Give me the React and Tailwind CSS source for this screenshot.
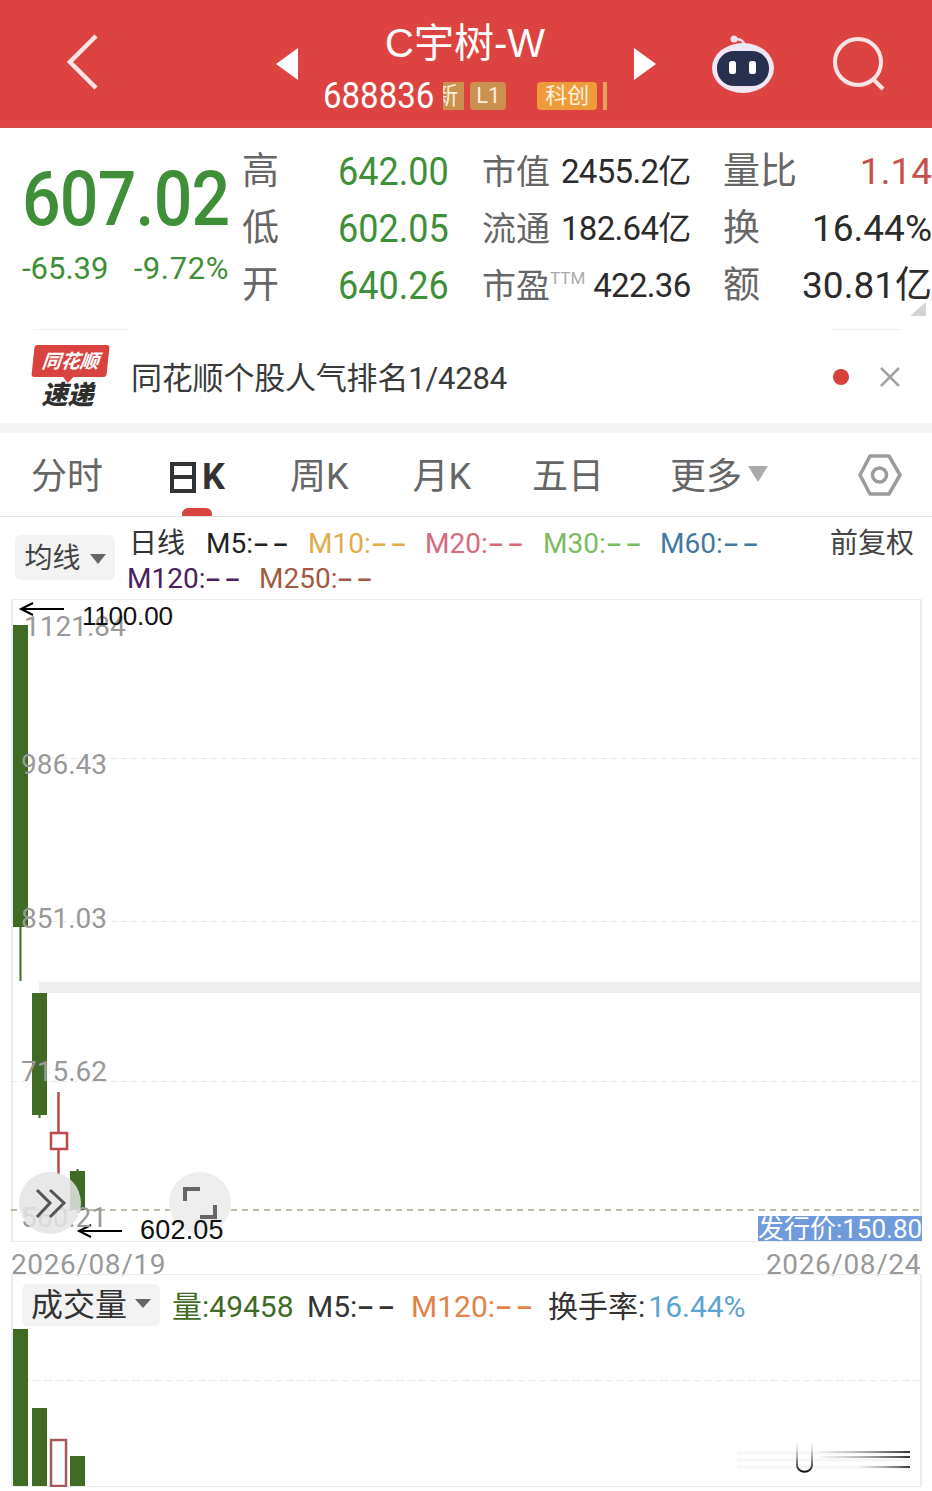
const GREEN = 'text-[#3f8f38]'

const QUOTE_ROWS = [
  { label: '高', value: '642.00', stat: '市值', statValue: '2455.2亿', side: '量比', sideValue: '1.14', sideColor: 'text-[#c8504c]' },
  { label: '低', value: '602.05', stat: '流通', statValue: '182.64亿', side: '换', sideValue: '16.44%', sideColor: 'text-[#2b2b2b]' },
  { label: '开', value: '640.26', stat: '市盈', ttm: true, statValue: '422.36', side: '额', sideValue: '30.81亿', sideColor: 'text-[#2b2b2b]' },
]

function Dashes() {
  return <span className="inline-block origin-left scale-x-[1.7] font-medium tracking-[2px]">--</span>
}

function Robot() {
  return (
    <svg width="66" height="60" viewBox="710 34 66 60" className="shrink-0">
      <path d="M744 46c1-5-2-8-9-8" fill="none" stroke="#f3d9e4" strokeWidth="2.5" />
      <circle cx="734" cy="38" r="3.5" fill="#f6dfe6" />
      <ellipse cx="743" cy="67" rx="31" ry="25" fill="#efe6f6" />
      <rect x="717" y="50" width="52" height="35" rx="17" fill="#27304f" />
      <rect x="729" y="60" width="7" height="13" rx="2.5" fill="#fff" />
      <rect x="749" y="60" width="7" height="13" rx="2.5" fill="#fff" />
    </svg>
  )
}

function Header() {
  return (
    <div className="flex h-[128px] items-center bg-[#dd4441] border-b-2 border-[#d24a47] text-white">
      <svg width="32" height="58" viewBox="0 0 32 58" className="ml-[66px] mt-[-2px] shrink-0">
        <path d="M30 3L4 29l26 26" fill="none" stroke="#f8e4e2" strokeWidth="4.5" />
      </svg>
      <svg width="22" height="32" viewBox="0 0 22 32" className="ml-[178px] mt-[2px] shrink-0">
        <path d="M22 0v32L0 16z" fill="#fff" />
      </svg>
      <div className="ml-[25px] w-[311px] shrink-0 pt-[5px]">
        <div className="pl-[62px] font-['Liberation_Sans','Noto_Sans_CJK_SC',sans-serif] text-[40px] leading-[44px]">C宇树-W</div>
        <div className="mt-[16px] flex h-[30px] items-center">
          <span className="inline-block origin-left scale-y-[1.1] text-[33px] leading-[30px]">688836</span>
          <span className="ml-[9px] flex h-[28px] w-[21px] items-center overflow-hidden bg-[#cc9050] text-[24px] text-[#fbeedd]">
            <span className="ml-[-9px] shrink-0">新</span>
          </span>
          <span className="ml-[6px] flex h-[28px] w-[36px] items-center justify-center rounded-sm bg-[#cc9050] text-[22px] text-[#fbeedd]">L1</span>
          <span className="ml-[31px] flex h-[28px] w-[60px] items-center justify-center rounded-sm bg-[#ee9c39] text-[22px] text-[#fdf1df]">科创</span>
          <span className="ml-[6px] h-[28px] w-[4px] bg-[#e9a35a]" />
        </div>
      </div>
      <svg width="22" height="32" viewBox="0 0 22 32" className="mt-[2px] shrink-0">
        <path d="M0 0v32l22-16z" fill="#fff" />
      </svg>
      <div className="ml-[54px] mt-[3px]">
        <Robot />
      </div>
      <svg width="56" height="54" viewBox="0 0 56 54" className="ml-[56px] mt-[2px] shrink-0">
        <circle cx="26" cy="25" r="23" fill="none" stroke="#f8e4e2" strokeWidth="4" />
        <path d="M41 42l10 10" stroke="#f8e4e2" strokeWidth="4" />
      </svg>
    </div>
  )
}

function Quote() {
  return (
    <div className="relative flex h-[202px] bg-white">
      <div className="w-[242px] shrink-0 pl-[22px] pt-[31px]">
        <div className={`origin-center scale-y-[1.12] text-[68px] font-medium leading-[80px] tracking-[-0.8px] ${GREEN}`}>607.02</div>
        <div className={`mt-[10px] flex w-[207px] justify-between text-[31px] leading-[40px] ${GREEN}`}>
          <span>-65.39</span>
          <span className="tracking-[0.6px]">-9.72%</span>
        </div>
      </div>
      <div className="grid grid-cols-[96px_144px_241px_209px] auto-rows-[57px] pt-[15px] items-center">
        {QUOTE_ROWS.map((row) => (
          <QuoteRow key={row.label} row={row} />
        ))}
      </div>
      <svg width="16" height="16" viewBox="0 0 16 16" className="absolute right-[6px] bottom-[12px]">
        <path d="M16 0v14H0z" fill="#d4d4d4" />
      </svg>
    </div>
  )
}

function QuoteRow({ row }) {
  return (
    <>
      <span className="text-[37px] leading-none text-[#666]">{row.label}</span>
      <span className={`inline-block scale-y-[1.08] text-[36px] leading-none ${GREEN}`}>{row.value}</span>
      <span className="flex items-center whitespace-nowrap text-[#2b2b2b]">
        <span className="text-[34px] leading-none text-[#666]">{row.stat}</span>
        {row.ttm && <span className="mb-[14px] text-[17px] leading-none text-[#aaa]">TTM</span>}
        <span className={`${row.ttm ? 'ml-[8px]' : 'ml-[11px]'} text-[33px] leading-none tracking-[-0.7px]`}>{row.statValue}</span>
      </span>
      <span className="flex items-center justify-between whitespace-nowrap">
        <span className="text-[37px] leading-none text-[#666]">{row.side}</span>
        <span className={`text-[37px] leading-none ${row.sideColor}`}>{row.sideValue}</span>
      </span>
    </>
  )
}

function AlertRow() {
  return (
    <div className="relative flex h-[93px] items-center bg-white pl-[33px]">
      <div className="absolute left-[33px] top-[-1px] h-px w-[95px] bg-[#f1f1f1]" />
      <div className="absolute left-[832px] top-[-1px] h-px w-[69px] bg-[#f1f1f1]" />
      <div className="flex w-[75px] shrink-0 flex-col items-center">
        <div className="relative flex h-[32px] w-[75px] -skew-x-6 items-center justify-center rounded-[3px] bg-[#d8433f] text-[19px] font-bold italic leading-none text-white">
          同花顺
          <span className="absolute bottom-[-6px] left-[31px] h-0 w-0 border-x-[6px] border-t-[7px] border-x-transparent border-t-[#d8433f]" />
        </div>
        <div className="mr-[6px] mt-[4px] text-[26px] font-black italic leading-[28px] text-[#2f2f2f]">速递</div>
      </div>
      <div className="ml-[23px] w-[375px] shrink-0 whitespace-nowrap pt-[3px] text-[31px] leading-none tracking-[-0.2px] text-[#3a3a3a]">同花顺个股人气排名1/4284</div>
      <span className="ml-[327px] h-[16px] w-[16px] rounded-full bg-[#d8403c]" />
      <svg width="22" height="22" viewBox="0 0 22 22" className="ml-[30px] shrink-0">
        <path d="M2 2l18 18M20 2L2 20" stroke="#a3a3a3" strokeWidth="2.5" />
      </svg>
    </div>
  )
}

function Tabs() {
  return (
    <div className="relative flex h-[84px] items-center border-b border-[#e4e4e4] bg-white pt-[5px] text-[36px] leading-none text-[#666]">
      <span className="ml-[31px]">分时</span>
      <span className="ml-[67px] flex items-center font-bold text-[#333]">
        <svg width="26" height="31" viewBox="0 0 26 31" className="mr-[6px] shrink-0">
          <path d="M2 2h22v27H2zM2 15h22" fill="none" stroke="#333" strokeWidth="4" />
        </svg>
        K
      </span>
      <span className="ml-[65px]">周K</span>
      <span className="ml-[64px]">月K</span>
      <span className="ml-[61px]">五日</span>
      <span className="ml-[66px]">更多</span>
      <span className="ml-[6px] mb-[6px] h-0 w-0 border-x-[10px] border-t-[16px] border-x-transparent border-t-[#aaa]" />
      <svg width="44" height="42" viewBox="859 454 44 42" className="ml-[90px] mt-[-5px] shrink-0">
        <path d="M861 475l10-19h19l11 19-11 19h-19z" fill="none" stroke="#9c9c9c" strokeWidth="3.5" strokeLinejoin="round" />
        <circle cx="880.5" cy="475" r="7" fill="none" stroke="#9c9c9c" strokeWidth="3.5" />
      </svg>
      <span className="absolute bottom-0 left-[182px] h-[8px] w-[30px] rounded-t-md bg-[#d8433f]" />
    </div>
  )
}

function Legend() {
  return (
    <div className="flex h-[82px] bg-white text-[28px] leading-[36px]">
      <div className="ml-[15px] mt-[18px] flex h-[45px] w-[100px] items-center justify-center rounded-md bg-[#f3f3f3] pt-[3px] text-[#444]">
        均线
        <span className="ml-[9px] h-0 w-0 border-x-[8px] border-t-[10px] border-x-transparent border-t-[#666]" />
      </div>
      <div className="ml-[12px] w-[805px] pt-[9px]">
        <div className="flex h-[35px]">
          <span className="ml-[2px] w-[77px] text-[#333]">日线</span>
          <span className="w-[102px] text-[#222]">M5:<Dashes /></span>
          <span className="w-[117px] text-[#e0ad4a]">M10:<Dashes /></span>
          <span className="w-[118px] text-[#d76a7d]">M20:<Dashes /></span>
          <span className="w-[117px] text-[#7cbb5f]">M30:<Dashes /></span>
          <span className="w-[170px] text-[#44799f]">M60:<Dashes /></span>
          <span className="text-[#444]">前复权</span>
        </div>
        <div className="flex h-[36px]">
          <span className="w-[132px] text-[#4a2060]">M120:<Dashes /></span>
          <span className="text-[#a45a42]">M250:<Dashes /></span>
        </div>
      </div>
    </div>
  )
}

function KlineChart() {
  return (
    <div className="relative ml-[11px] h-[643px] w-[911px] border-x-2 border-y border-[#ececec]">
      <svg width="910" height="643" viewBox="11 599 910 643" className="absolute left-[-2px] top-[-1px]">
        <path d="M11 758.500h910M11 921.500h910M11 1081.500h910" stroke="#e8e8e8" strokeDasharray="6 4" />
        <rect x="39" y="982" width="882" height="11" fill="#eeeeee" />
        <path d="M11 1210h910" stroke="#a5ab85" strokeWidth="1.5" strokeDasharray="6 5" />

        <rect x="13" y="625" width="15" height="302" fill="#3f6b25" />
        <path d="M20.500 927v54" stroke="#3f6b25" strokeWidth="2" />
        <rect x="32" y="993" width="15" height="122" fill="#3f6b25" />
        <path d="M39.500 1115v3" stroke="#3f6b25" strokeWidth="2" />
        <path d="M58.500 1092v83" stroke="#c0474b" strokeWidth="2.5" />
        <rect x="51" y="1133" width="16" height="16" fill="#fff" stroke="#c0474b" strokeWidth="2.5" />
        <path d="M77.500 1169v4" stroke="#3f6b25" strokeWidth="2" />
        <rect x="70" y="1171" width="15" height="39" fill="#3f6b25" />

        <path d="M64 609H21M33 603l-12 6 12 6" fill="none" stroke="#000" strokeWidth="2" />
        <path d="M122 1231H79M91 1225l-12 6 12 6" fill="none" stroke="#000" strokeWidth="2" />
      </svg>

      <span className="absolute left-[11px] top-[8px] text-[28px] leading-[38px] text-[#999]">1121.84</span>
      <span className="absolute left-[8px] top-[146px] text-[28px] leading-[38px] text-[#999]">986.43</span>
      <span className="absolute left-[8px] top-[300px] text-[28px] leading-[38px] text-[#999]">851.03</span>
      <span className="absolute left-[8px] top-[453px] text-[28px] leading-[38px] text-[#999]">715.62</span>
      <span className="absolute left-[8px] top-[599px] text-[28px] leading-[38px] text-[#999]">560.21</span>

      <span className="absolute left-[69px] top-[-1px] font-['Liberation_Sans',sans-serif] text-[26px] leading-[34px] tracking-[-0.2px] text-[#111]">1100.00</span>

      <span className="absolute left-[6px] top-[572px] flex h-[62px] w-[62px] items-center justify-center rounded-full bg-[#e4e4e4]/85">
        <svg width="32" height="32" viewBox="0 0 32 32">
          <path d="M3 3l13 13L3 30M16 3l14 13-14 14" fill="none" stroke="#555" strokeWidth="3" />
        </svg>
      </span>
      <span className="absolute left-[156px] top-[572px] flex h-[62px] w-[62px] items-center justify-center rounded-full bg-[#eeeeee]">
        <svg width="34" height="32" viewBox="0 0 34 32">
          <path d="M2 14V2h15M32 18v12H17" fill="none" stroke="#666" strokeWidth="4" />
        </svg>
      </span>

      <span className="absolute left-[127px] top-[614px] font-['Liberation_Sans',sans-serif] text-[27px] leading-[32px] tracking-[0.2px] text-[#111]">602.05</span>
      <span className="absolute bottom-0 right-[-2px] flex h-[25px] w-[164px] items-center justify-center whitespace-nowrap bg-[#6f9bdc] text-[26px] leading-none text-white">发行价:150.80</span>
    </div>
  )
}

function VolumePanel() {
  return (
    <div className="relative ml-[11px] h-[213px] w-[911px] border-x-2 border-y border-[#ececec]">
      <div className="flex items-center pl-[9px] pt-[9px] text-[30px] leading-none">
        <div className="flex h-[42px] w-[138px] items-center justify-center rounded-md bg-[#f3f3f3] text-[32px] text-[#333]">
          成交量
          <span className="ml-[8px] mb-[4px] h-0 w-0 border-x-[8px] border-t-[9px] border-x-transparent border-t-[#666]" />
        </div>
        <span className="ml-[12px] mt-[3px] w-[135px] text-[#3f6b25]">量:49458</span>
        <span className="mt-[3px] w-[104px] text-[#333]">M5:<Dashes /></span>
        <span className="mt-[3px] w-[137px] text-[#e0824a]">M120:<Dashes /></span>
        <span className="mt-[3px] text-[#333]">换手率:</span>
        <span className="ml-[3px] mt-[3px] text-[#5ba3d0]">16.44%</span>
      </div>
      <svg width="910" height="213" viewBox="11 1274 910 213" className="absolute left-[-2px] top-[-1px]">
        <defs>
          <linearGradient id="uFade" x1="0" y1="0" x2="0" y2="1">
            <stop offset="0" stopColor="#bbb" stopOpacity="0.2" />
            <stop offset="1" stopColor="#111" />
          </linearGradient>
          <linearGradient id="lineFade" x1="0" y1="0" x2="1" y2="0">
            <stop offset="0" stopColor="#999" stopOpacity="0.1" />
            <stop offset="1" stopColor="#333" />
          </linearGradient>
        </defs>
        <path d="M11 1380.500h910" stroke="#e8e8e8" strokeDasharray="8 3" />
        <rect x="13" y="1329" width="15" height="157" fill="#3f6b25" />
        <rect x="32" y="1408" width="15" height="78" fill="#3f6b25" />
        <rect x="51" y="1440" width="15" height="46" fill="#fff" stroke="#a85a5a" strokeWidth="2.5" />
        <rect x="70" y="1456" width="15" height="30" fill="#3f6b25" />
        <path d="M737 1453h170M737 1460h170M737 1467h170" stroke="#f6f6f6" strokeWidth="3" />
        <path d="M797 1444v21c0 9 15 9 15 0v-21" fill="none" stroke="url(#uFade)" strokeWidth="2" />
        <rect x="820" y="1451" width="90" height="2" fill="url(#lineFade)" />
        <rect x="820" y="1456" width="90" height="2" fill="url(#lineFade)" />
        <rect x="860" y="1466" width="50" height="2" fill="url(#lineFade)" />
      </svg>
    </div>
  )
}

export default function App() {
  return (
    <div className="h-[1491px] w-[932px] overflow-hidden bg-white font-['Roboto','Noto_Sans_CJK_SC',sans-serif]">
      <Header />
      <Quote />
      <AlertRow />
      <div className="h-[10px] bg-[#f5f5f5]" />
      <Tabs />
      <Legend />
      <KlineChart />
      <div className="flex h-[32px] items-start justify-between px-[11px] pt-[9px] text-[28px] leading-none tracking-[0.6px] text-[#999]">
        <span>2026/08/19</span>
        <span>2026/08/24</span>
      </div>
      <VolumePanel />
    </div>
  )
}
